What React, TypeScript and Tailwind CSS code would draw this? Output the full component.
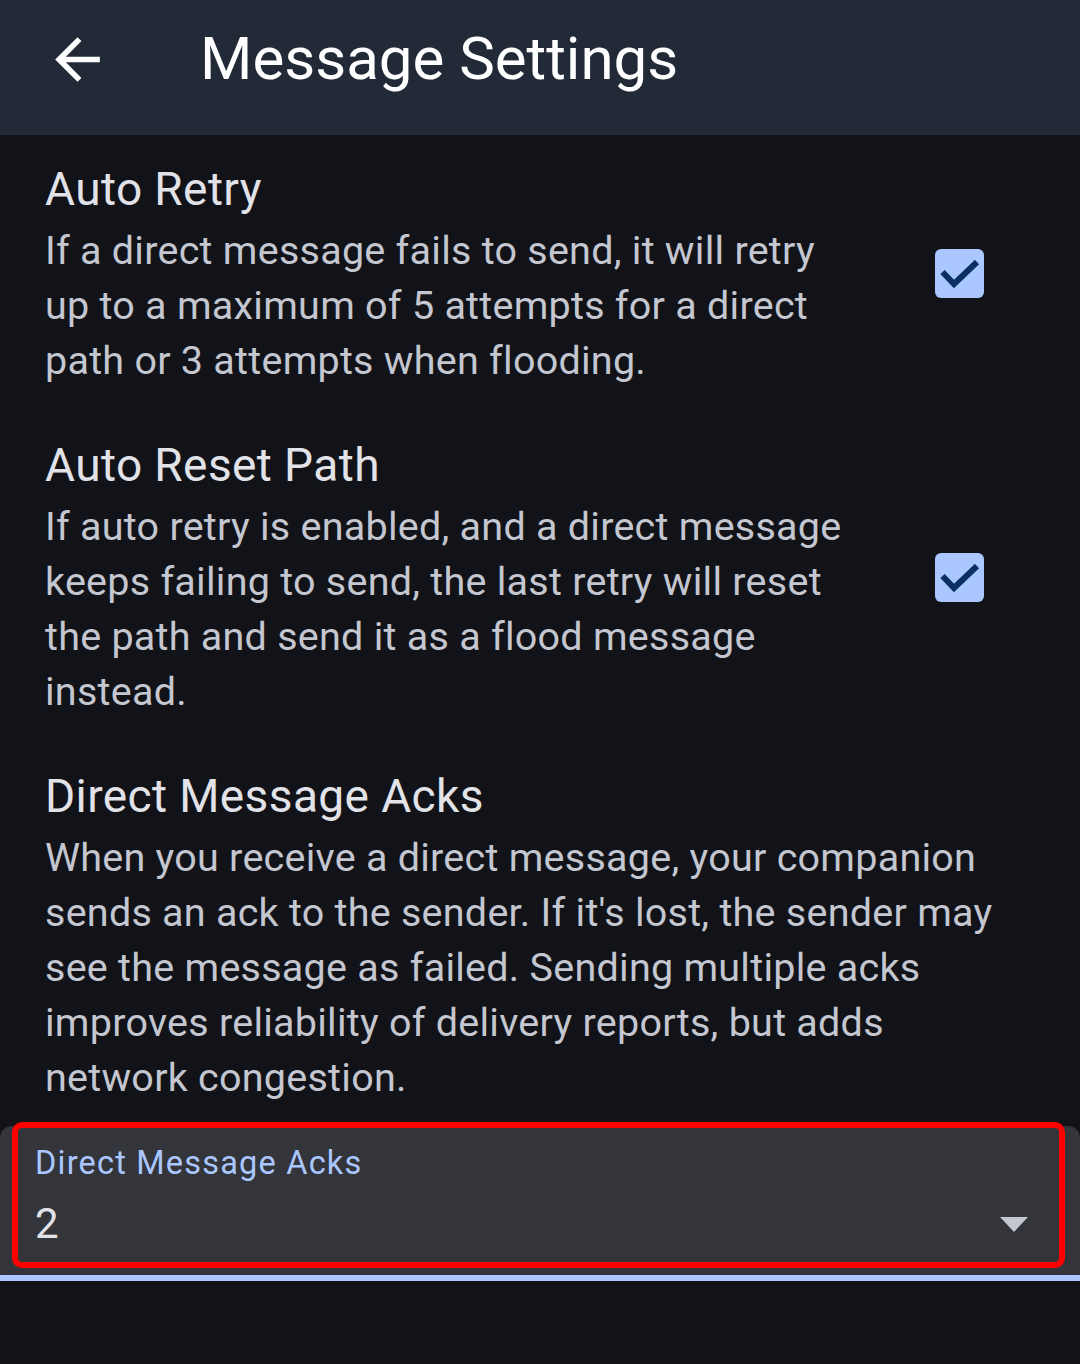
import React from "react";

function CheckBox() {
  return (
    <div className="w-[49px] h-[49px] rounded-[6px] bg-[#aac7ff] flex items-center justify-center">
      <svg width="49" height="49" viewBox="0 0 49 49">
        <polyline points="7.5,23 19,35 42,13" fill="none" stroke="#0a305f" strokeWidth="6" strokeLinecap="butt" strokeLinejoin="miter" />
      </svg>
    </div>
  );
}

function Section({ title, body, checked }: { title: string; body: string; checked?: boolean }) {
  return (
    <div className="flex items-center">
      <div className={checked ? "w-[810px]" : "flex-1"}>
        <div className="text-[46px] leading-[60px] text-[#e2e2e9] tracking-[0.4px]">{title}</div>
        <div className="mt-[4px] text-[39.5px] leading-[55px] text-[#c4c6d0] tracking-[0.25px]">{body}</div>
      </div>
      {checked && (
        <div className="flex-1 flex justify-end pr-[51px]">
          <CheckBox />
        </div>
      )}
    </div>
  );
}

export default function App() {
  return (
    <div className="w-[1080px] h-[1364px] bg-[#111318] overflow-hidden" style={{ fontFamily: "Roboto, 'Noto Sans', sans-serif" }}>
      <div className="h-[135px] bg-[#222a38] flex items-start">
        <div className="h-[118px] flex items-center">
          <div className="ml-[44px] w-[67px] h-[67px]">
            <svg width="67" height="67" viewBox="0 0 24 24">
              <path d="M20 11H7.83l5.59-5.59L12 4l-8 8 8 8 1.41-1.41L7.83 13H20v-2z" fill="#ffffff" />
            </svg>
          </div>
          <div className="ml-[89px] text-[60px] leading-none text-white">Message Settings</div>
        </div>
      </div>
      <div className="px-[45px] pt-[24px] flex flex-col gap-[47px]">
        <Section
          title="Auto Retry"
          body="If a direct message fails to send, it will retry up to a maximum of 5 attempts for a direct path or 3 attempts when flooding."
          checked
        />
        <Section
          title="Auto Reset Path"
          body="If auto retry is enabled, and a direct message keeps failing to send, the last retry will reset the path and send it as a flood message instead."
          checked
        />
        <Section
          title="Direct Message Acks"
          body="When you receive a direct message, your companion sends an ack to the sender. If it's lost, the sender may see the message as failed. Sending multiple acks improves reliability of delivery reports, but adds network congestion."
        />
      </div>
      <div className="mt-[21px] relative">
        <div className="h-[155px] bg-[#33353b] rounded-t-[12px] flex flex-col border-b-[6px] border-[#aac7ff]">
          <div className="pl-[35px] pt-[17px] text-[32.5px] leading-[40px] text-[#aac7ff] tracking-[1.2px]">Direct Message Acks</div>
          <div className="flex items-center pl-[35px] pr-[52px] mt-[16px]">
            <div className="flex-1 text-[42px] leading-[50px] text-[#e2e2e9]">2</div>
            <svg width="28" height="15" viewBox="0 0 28 15">
              <polygon points="0,0 28,0 14,15" fill="#c4c6d0" />
            </svg>
          </div>
        </div>
        <div className="absolute left-[12px] top-[-4px] w-[1053px] h-[146px] border-[6px] border-[#ff0000] rounded-[10px] pointer-events-none" />
      </div>
    </div>
  );
}
